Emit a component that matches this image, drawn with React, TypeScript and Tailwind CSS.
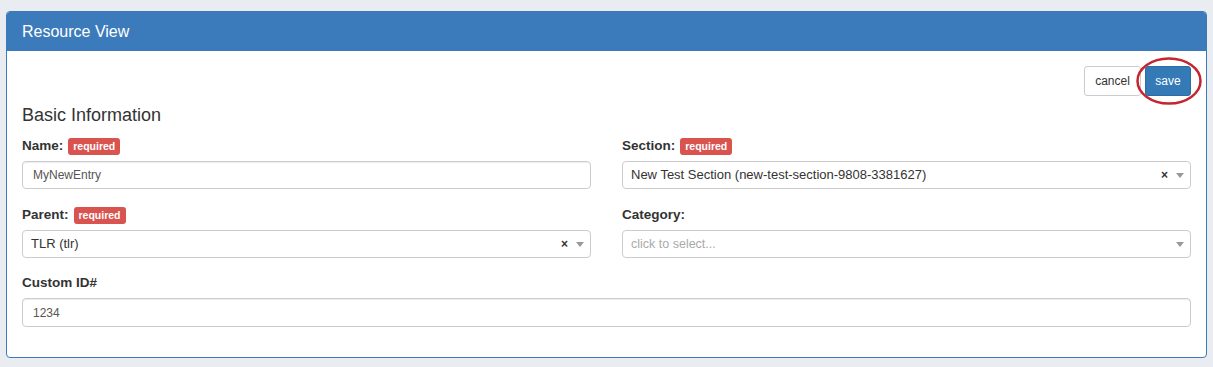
import React from "react"

function Badge() {
  return (
    <span className="ml-[5px] inline-flex h-[17px] items-center rounded-[3px] bg-[#d9534f] px-[5px] text-[10.5px] font-bold leading-none text-white">
      required
    </span>
  )
}

function Label({ text, required }: { text: string; required?: boolean }) {
  return (
    <div className="flex h-[17px] items-center">
      <span className="text-[13.5px] font-bold text-[#333]">{text}</span>
      {required && <Badge />}
    </div>
  )
}

function TextInput({ value, tall }: { value: string; tall?: boolean }) {
  return (
    <div
      className={`mt-[6px] flex ${tall ? "h-[29px]" : "h-[28px]"} items-center rounded-[4px] border border-[#ccc] bg-white px-[10px] text-[12px] text-[#555] shadow-[inset_0_1px_1px_rgba(0,0,0,0.075)]`}
    >
      {value}
    </div>
  )
}

function Caret() {
  return (
    <svg width="8" height="5" viewBox="0 0 8 5" className="ml-[8px]">
      <path d="M0 0 L8 0 L4 5 Z" fill="#999" />
    </svg>
  )
}

function Select({ value, placeholder, clearable }: { value?: string; placeholder?: string; clearable?: boolean }) {
  return (
    <div className="mt-[6px] flex h-[28px] items-center rounded-[4px] border border-[#ccc] bg-white pl-[8px] pr-[6px]">
      <span className={`flex-1 ${value ? "text-[13px] text-[#333]" : "text-[12.5px] text-[#aaa]"}`}>
        {value ?? placeholder}
      </span>
      {clearable && <span className="text-[12px] font-bold leading-none text-[#333]">×</span>}
      <Caret />
    </div>
  )
}

export default function App() {
  return (
    <div className="h-[367px] w-[1213px] bg-[#e9edf1] pl-[6px] pt-[11px]" style={{ fontFamily: '"Liberation Sans", Arial, sans-serif' }}>
      <div className="w-[1201px] overflow-hidden rounded-[4px] border border-[#3b7bb9] bg-white">
        {/* Header */}
        <div className="flex h-[39px] items-center bg-[#3c7bbb] px-[15px] text-[16px] text-white">
          Resource View
        </div>

        {/* Body */}
        <div className="px-[15px] pb-[30px] pt-[15px]">
          <div className="flex justify-end">
            <div className="relative flex gap-[4px]">
              <button className="h-[30px] w-[57px] rounded-[3px] border border-[#ccc] bg-white text-[12px] text-[#333]">
                cancel
              </button>
              <button className="h-[30px] w-[46px] rounded-[3px] border border-[#2e6da4] bg-[#337ab7] text-[12px] text-white">
                save
              </button>
              {/* red annotation ring */}
              <svg width="68" height="50" viewBox="0 0 68 50" className="pointer-events-none absolute left-[51px] top-[-10px]">
                <ellipse cx="34" cy="25" rx="31.5" ry="22.5" fill="none" stroke="#c4252e" strokeWidth="2.5" />
              </svg>
            </div>
          </div>

          <h2 className="mt-[9px] h-[20px] text-[18px] leading-[20px] text-[#333]">Basic Information</h2>

          <div className="grid grid-cols-2 gap-x-[31px]">
            <div className="mt-[13px]">
              <Label text="Name:" required />
              <TextInput value="MyNewEntry" />
            </div>
            <div className="mt-[13px]">
              <Label text="Section:" required />
              <Select value="New Test Section (new-test-section-9808-3381627)" clearable />
            </div>
            <div className="mt-[18px]">
              <Label text="Parent:" required />
              <Select value="TLR (tlr)" clearable />
            </div>
            <div className="mt-[18px]">
              <Label text="Category:" />
              <Select placeholder="click to select..." />
            </div>
          </div>

          <div className="mt-[17px]">
            <Label text="Custom ID#" />
            <TextInput value="1234" tall />
          </div>
        </div>
      </div>
    </div>
  )
}
